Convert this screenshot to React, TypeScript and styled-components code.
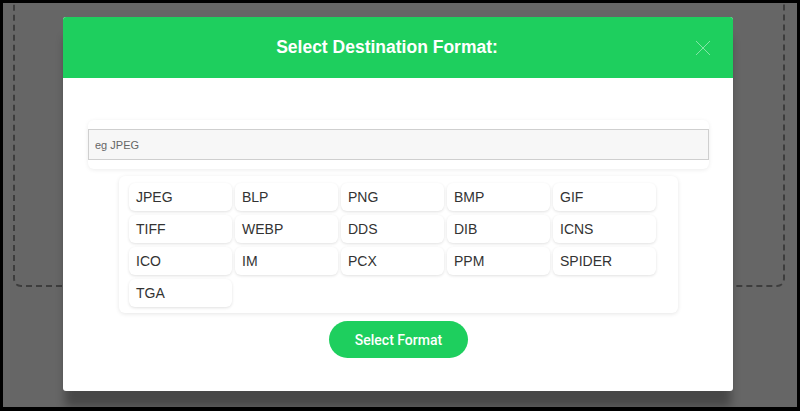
import React from "react";
import styled, { createGlobalStyle } from "styled-components";

const GlobalStyle = createGlobalStyle`
  html, body {
    margin: 0;
    padding: 0;
  }
  body {
    font-family: "Liberation Sans", Arial, sans-serif;
    background: #000;
  }
`;

const formats = [
  "JPEG", "BLP", "PNG", "BMP", "GIF",
  "TIFF", "WEBP", "DDS", "DIB", "ICNS",
  "ICO", "IM", "PCX", "PPM", "SPIDER",
  "TGA",
];

export default function App() {
  return (
    <>
      <GlobalStyle />
      <Frame>
        <Page>
          <DropZone />
        </Page>
        <Overlay>
          <Modal>
            <Header>
              <Title>Select Destination Format:</Title>
              <CloseButton aria-label="Close">
                <svg width="16" height="16" viewBox="0 0 16 16">
                  <path d="M1 1 L15 15 M15 1 L1 15" stroke="currentColor" strokeWidth="1" fill="none" />
                </svg>
              </CloseButton>
            </Header>
            <Body>
              <SearchCard>
                <SearchInput placeholder="eg JPEG" />
              </SearchCard>
              <FormatCard>
                {formats.map((f) => (
                  <FormatItem key={f}>{f}</FormatItem>
                ))}
              </FormatCard>
              <SubmitButton>Select Format</SubmitButton>
            </Body>
          </Modal>
        </Overlay>
      </Frame>
    </>
  );
}

const Frame = styled.div`
  position: relative;
  width: 800px;
  height: 411px;
  box-sizing: border-box;
  border: 3px solid #000;
  border-bottom-width: 4px;
  overflow: hidden;
  background: #fff;
`;

const Page = styled.div`
  padding: 0 12px 0 10px;
  height: 100%;
  box-sizing: border-box;
`;

const DropZone = styled.div`
  margin-top: -20px;
  height: 304px;
  box-sizing: border-box;
  border: 2px dashed #9a9a9a;
  border-radius: 8px;
`;

const Overlay = styled.div`
  position: absolute;
  inset: 0;
  background: rgba(0, 0, 0, 0.6);
  display: flex;
  justify-content: center;
  align-items: flex-start;
  padding: 14px 0 0 0;
`;

const Modal = styled.div`
  width: 670px;
  margin-left: -4px;
  background: #fff;
  border-radius: 3px;
  overflow: hidden;
  box-shadow: 0 18px 10px -2px rgba(0, 0, 0, 0.3);
`;

const Header = styled.div`
  height: 61px;
  background: #1ecf5e;
  display: flex;
  align-items: center;
  padding: 0 22px 0 16px;
`;

const Title = styled.h2`
  flex: 1;
  margin: 0;
  text-align: center;
  color: #fff;
  font-size: 17.5px;
  font-weight: 700;
`;

const CloseButton = styled.button`
  width: 16px;
  height: 16px;
  padding: 0;
  border: none;
  background: none;
  color: rgba(255, 255, 255, 0.45);
  display: flex;
  cursor: pointer;
`;

const Body = styled.div`
  padding: 42px 24px 33px 25px;
  display: flex;
  flex-direction: column;
  align-items: center;
`;

const SearchCard = styled.div`
  align-self: stretch;
  padding: 9px 0;
  background: #fff;
  border-radius: 6px;
  box-shadow: 0 1px 4px rgba(0, 0, 0, 0.08);
`;

const SearchInput = styled.input`
  display: block;
  width: 100%;
  height: 31px;
  box-sizing: border-box;
  padding: 0 6px;
  background: #f7f7f7;
  border: 1px solid #cfcfcf;
  font-family: "Liberation Sans", Arial, sans-serif;
  font-size: 11px;
  color: #333;
  outline: none;

  &::placeholder {
    color: #666;
  }
`;

const FormatCard = styled.div`
  margin-top: 7px;
  width: 559px;
  box-sizing: border-box;
  padding: 7px 18px 6px 10px;
  display: grid;
  grid-template-columns: repeat(5, 103px);
  grid-auto-rows: 28px;
  gap: 4px 3px;
  background: #fff;
  border-radius: 6px;
  box-shadow: 0 1px 4px rgba(0, 0, 0, 0.1);
`;

const FormatItem = styled.div`
  display: flex;
  align-items: center;
  padding: 0 7px;
  background: #fff;
  border-radius: 6px;
  box-shadow: 0 1px 3px rgba(0, 0, 0, 0.12);
  font-size: 14px;
  color: #333;
  cursor: pointer;
`;

const SubmitButton = styled.button`
  margin-top: 8px;
  width: 139px;
  height: 37px;
  border: none;
  border-radius: 19px;
  background: #1ecf5e;
  color: #fff;
  font-family: Roboto, "Liberation Sans", sans-serif;
  font-size: 14px;
  font-weight: 500;
  cursor: pointer;
`;
